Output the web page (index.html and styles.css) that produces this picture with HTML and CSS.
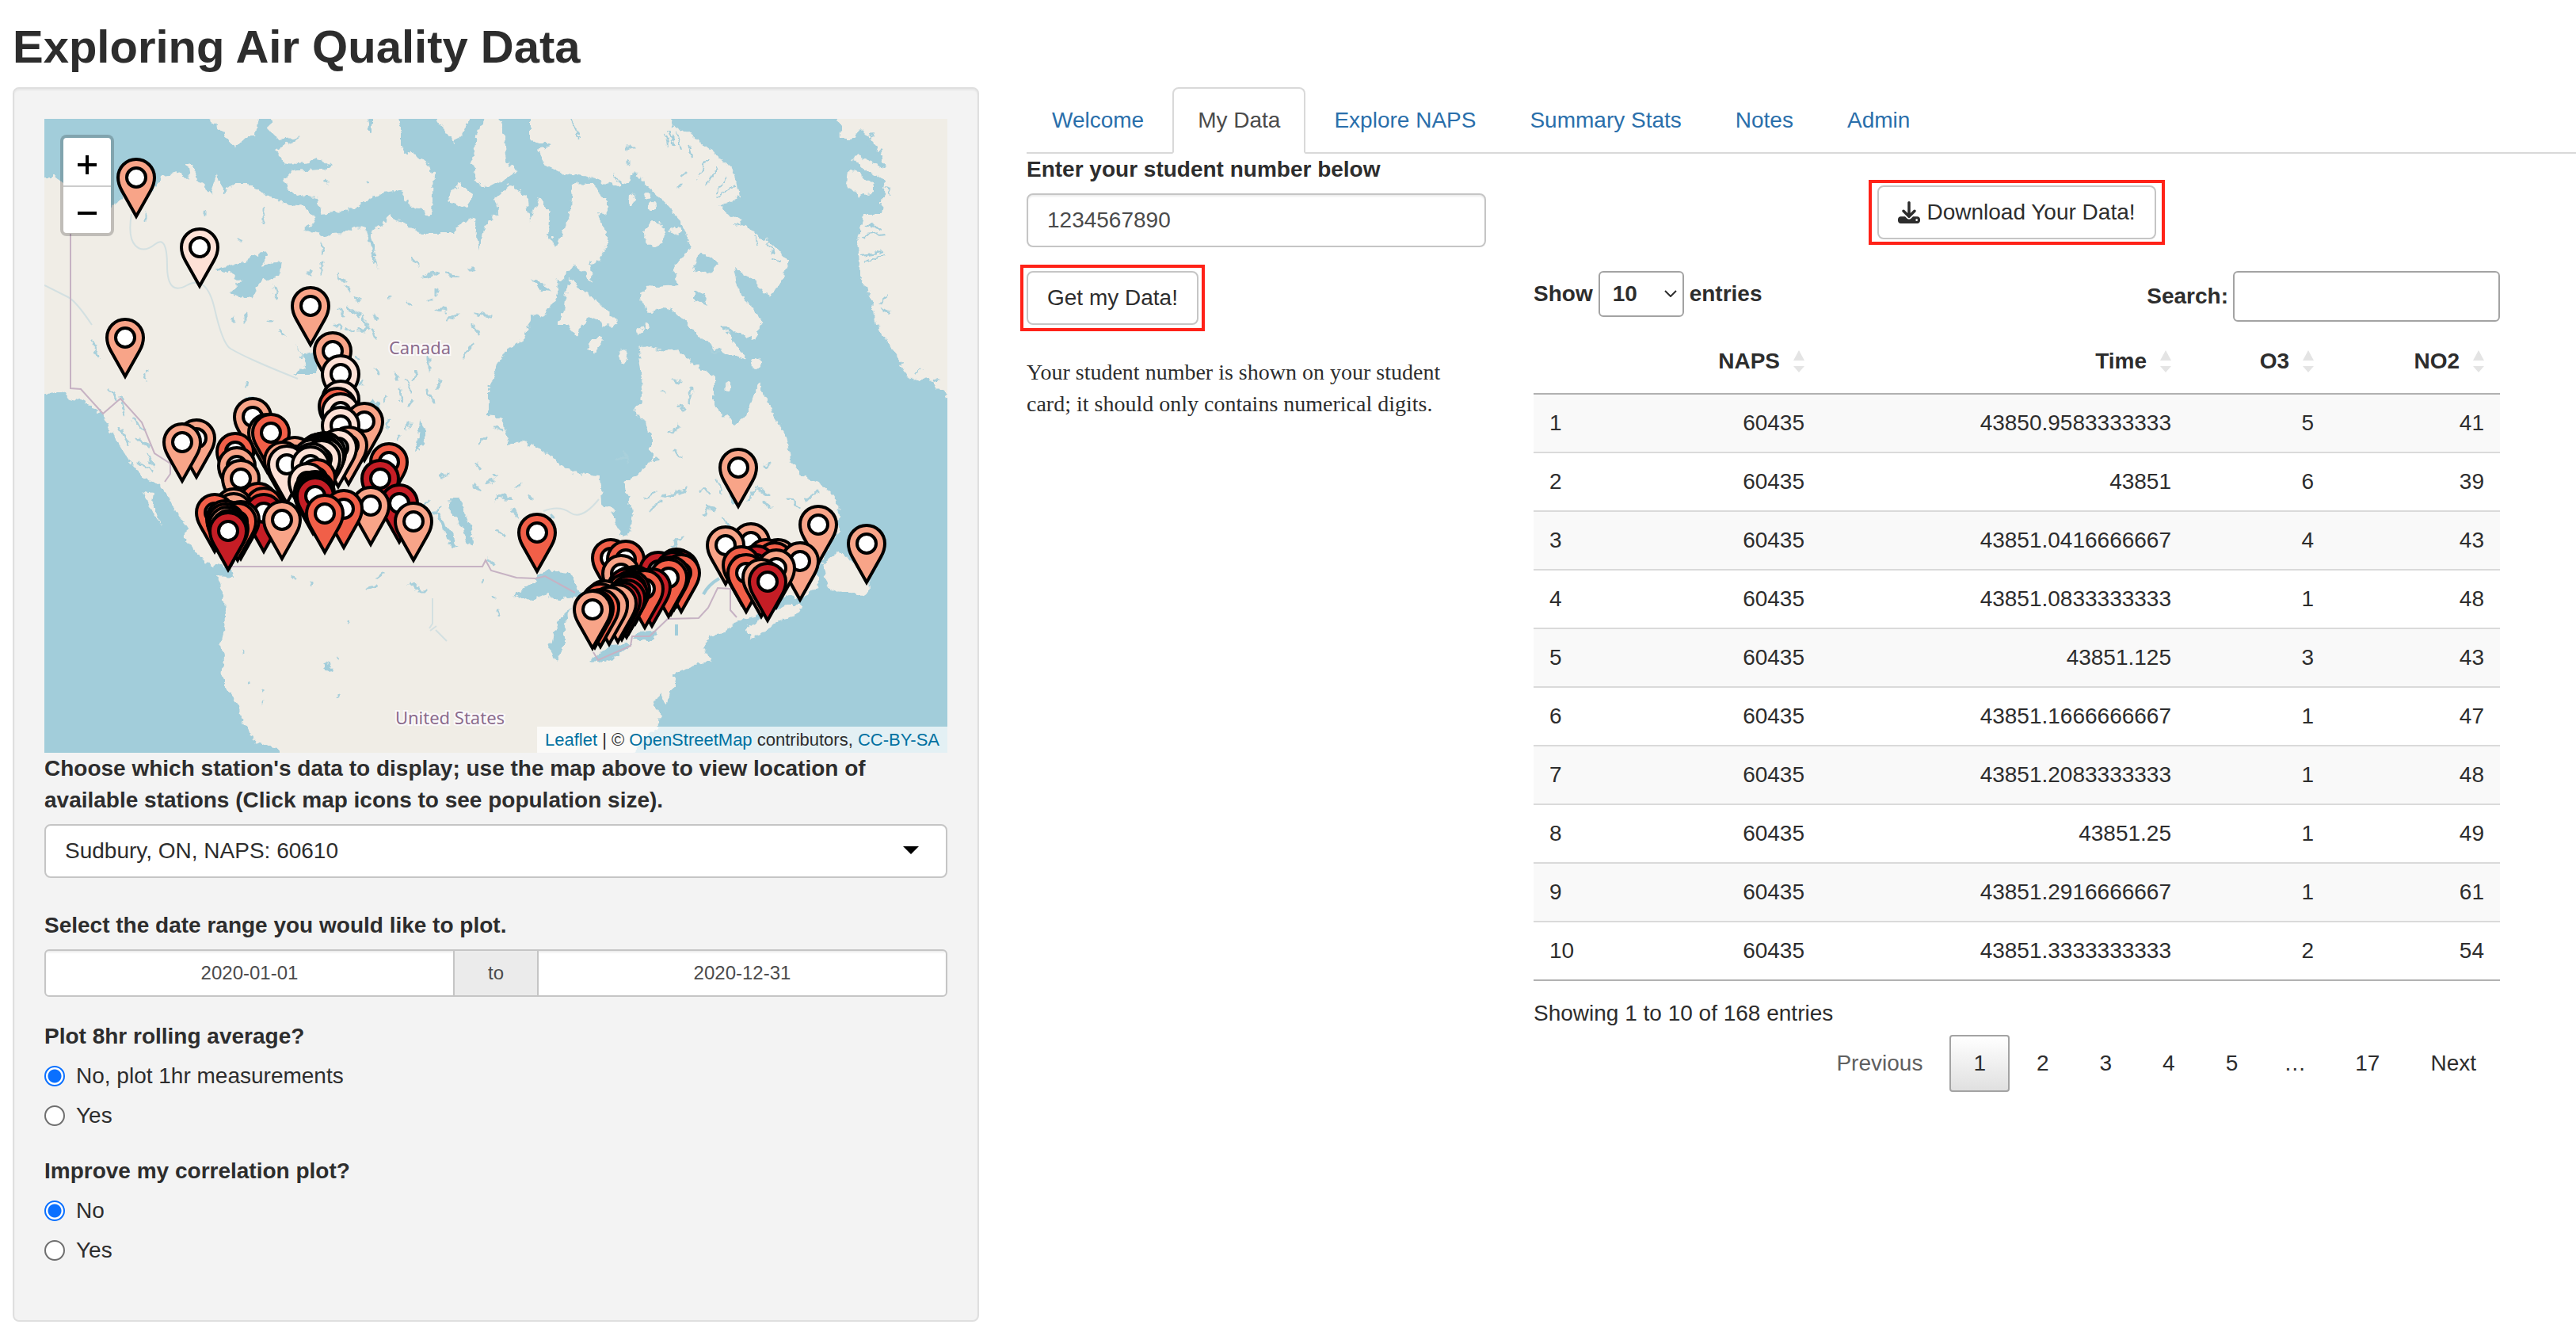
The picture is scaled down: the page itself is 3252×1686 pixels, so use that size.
FILE: index.html
```html
<!DOCTYPE html>
<html lang="en">
<head>
<meta charset="utf-8">
<meta name="viewport" content="width=device-width, initial-scale=1">
<title>Exploring Air Quality Data</title>
<link rel="stylesheet" href="styles.css">
</head>
<body>
<h1 class="page-title">Exploring Air Quality Data</h1>
<div class="layout">
  <form class="sidebar">
    <div class="map">
      <svg class="map-canvas" viewBox="0 0 1140 800" role="img" aria-label="Map of monitoring stations in Canada">
        <defs>
          <filter id="rough" x="-2%" y="-2%" width="104%" height="104%">
            <feTurbulence type="fractalNoise" baseFrequency="0.1" numOctaves="3" seed="4" result="n"/>
            <feDisplacementMap in="SourceGraphic" in2="n" scale="11" xChannelSelector="R" yChannelSelector="G"/>
          </filter>
          <g id="pin">
            <path d="M0 49L-18 17C-22 10 -23 5 -23 0A23 23 0 0 1 23 0C23 5 22 10 18 17Z" stroke="#000" stroke-width="4"/>
            <circle r="12" fill="#fff" stroke="#000" stroke-width="4"/>
          </g>
        </defs>
        <rect class="water" width="1140" height="800"/>
        <g filter="url(#rough)">
          <g class="land">
            <path d="M-20 72L13 72 26 80 50 96 85 113 95 100 136 93 148 72 173 67 183 76 179 53 189 63 199 83 211 96 219 72 226 93 238 82 258 82 279 95 303 107 328 110 340 125 342 132 326 140 352 147 377 145 393 137 405 140 421 190 413 143 438 123 454 133 479 145 515 145 528 130 544 127 548 167 556 137 565 124 573 118 568 100 589 83 609 97 613 130 624 100 638 117 636 143 645 162 654 147 664 117 666 82 691 83 711 103 711 120 699 117 705 137 713 155 699 180 689 187 691 207 672 184 650 203 646 227 630 250 615 247 605 277 585 290 571 313 560 340 560 375 577 377 587 412 605 407 626 417 646 433 670 448 701 450 703 483 720 507 730 525 740 520 744 503 732 457 748 450 766 430 766 403 758 380 744 373 756 350 754 327 750 290 760 287 785 293 799 290 822 313 846 325 846 360 858 375 871 385 887 373 895 350 902 335 915 363 936 400 942 430 956 450 985 463 1001 483 1003 520 985 548 975 570 978 590 956 605 936 600 899 627 871 637 854 650 838 652 832 667 842 683 822 690 795 700 795 717 785 737 777 725 768 740 777 750 775 770 755 785 740 800 740 830 296 830 296 800 278 790 266 787 249 757 243 737 231 723 223 700 226 680 222 663 228 630 227 603 219 577 238 579 236 567 204 560 178 533 180 517 168 497 155 473 147 463 123 450 106 430 86 397 70 370 49 357 33 353 17 345 -20 348Z"/>
            <path d="M125 470L139 472 137 487 148 512 133 493Z"/>
            <path d="M207 -20L207 0 226 17 238 37 254 23 266 23 270 0 270 -20Z"/>
            <path d="M285 -20L285 0 283 13 295 25 324 22 291 40 301 53 328 57 344 50 364 60 348 65 311 67 303 77 307 90 320 98 344 100 348 120 377 117 401 107 426 93 450 90 462 110 489 122 491 70 479 53 450 37 450 17 444 -20Z"/>
            <path d="M524 80L542 97 532 113 509 103ZM495 -20L495 0 515 30 532 13 544 -20ZM556 -20L556 0 544 23 540 50 544 77 560 87 595 68 583 47 581 23 568 -20Z"/>
            <path d="M614 -20L614 28 642 33 622 40 630 57 658 70 695 75 724 87 740 78 742 63 764 87 805 130 815 162 793 192 801 210 758 213 750 230 766 245 785 237 805 250 830 277 854 293 887 303 870 282 854 260 895 278 907 257 895 237 879 223 871 190 895 203 915 227 930 203 941 178 911 153 879 130 852 110 879 100 873 73 858 53 828 30 809 13 793 10 785 -20Z"/>
            <path d="M662 200L683 217 707 240 724 257 715 263 687 250 671 273 662 260 646 260 656 243ZM691 278L706 278 695 293 685 293Z"/>
            <ellipse cx="730" cy="300" rx="5" ry="9"/><ellipse cx="771" cy="145" rx="13" ry="16"/><ellipse cx="796" cy="141" rx="7" ry="5"/><ellipse cx="751" cy="267" rx="5" ry="6"/><ellipse cx="761" cy="262" rx="4" ry="4"/><ellipse cx="741" cy="103" rx="4" ry="8"/><ellipse cx="762" cy="98" rx="4" ry="5"/><ellipse cx="768" cy="111" rx="5" ry="5"/><ellipse cx="862" cy="338" rx="3" ry="5"/><ellipse cx="712" cy="493" rx="8" ry="4"/><ellipse cx="898" cy="308" rx="5" ry="6"/>
            <path d="M1003 -20L1003 0 1007 23 1024 23 1030 13 1050 33 1062 63 1024 45 1020 52 1050 72 1062 77 1056 120 1034 120 1026 163 1030 197 1046 233 1050 260 1071 293 1093 330 1115 327 1140 352 1170 360 1170 -20Z"/>
            <path d="M1015 67L1030 68 1046 83 1046 93 1028 98 1013 83Z"/>
            <path d="M956 613L948 627 928 633 903 650 891 655 885 643 899 633 936 613ZM982 562L1003 545 1015 555 1040 575 1041 596 1030 603 1020 597 1004 597 988 590Z"/>
          </g>
          <g class="water">
            <path d="M213 190L246 183 279 167 283 173 271 187 299 180 295 200 275 203 258 227 234 220 248 203 230 193ZM317 283L324 300 346 293 344 323 311 323 332 313Z"/>
            <path d="M511 477L523 477 539 517 541 537 533 540 529 517 513 497ZM494 495L499 497 521 540 514 543 505 520Z"/>
            <path d="M474 380L482 396 480 412 468 420 472 400ZM414 352L424 364 418 374 410 360Z"/>
            <path d="M591 602L613 587 634 570 662 573 679 600 646 607 634 600 609 607ZM676 610L654 627 642 650 638 670 646 683 656 670 656 643 666 618ZM680 602L700 600 722 625 715 645 700 655 694 640Z"/>
            <path d="M690 683L707 687 740 667 736 660 707 670ZM740 657L748 648 773 647 768 657Z"/>
            <path d="M353 685L362 690 363 698 355 694ZM819 192L828 168 850 182 842 192 828 196ZM820 215L832 222 837 236 820 228ZM615 200L625 205 640 218 628 217Z"/>
            <path d="M408 -5L414 0 414 16 409 12Z"/>
          </g>
          <path class="lakes" d="M356 78l2 2M406 80l3 1M276 112v20M203 118v4M127 120v10M244 154h4M350 158l2 12M350 182v14M335 192v6M370 196l8 10M380 212l6 8M390 226l8 3M372 240l6 10M384 238l14 10M402 250l8 12M416 246l4 8M366 258l8 8M380 264l12 4M398 268l12 -4M414 266l4 10M290 212l4 14M254 248v8M282 254h6M295 266l10 8M238 250v6M340 220l8 14M464 176l8 8M478 200l20 -6M506 196l18 4M536 190h8M496 216v6M434 226h4M456 232l6 4M484 228h6M542 246l20 4M510 252l14 -6M540 260l10 12M496 240l10 2M540 286l-10 14M486 300v16M470 318l-6 12M456 330l8 14M442 322l4 8M420 316l4 6M432 350l-4 8M450 342l2 16M466 354l-6 8M404 330l-4 6M392 300l6 4M484 344l8 14M500 330l-4 12M436 380l-4 8M448 400v6M444 428l-6 6M456 390l6 -6M254 332v6M96 276l6 14M60 280l8 20M128 320v8M256 352h8M96 350l6 24M82 340l10 14M112 380l14 12M96 390l10 20M116 404l18 8M130 424l8 14M118 434l16 10M500 450h8M484 480l-6 10M500 490l-8 8M544 460l6 8M566 448l6 4M580 476l-10 4M590 494l6 8M570 520l12 6M560 556l8 8M556 582l-3 3M566 604l3 2M572 622v3M462 586l12 8M474 596h10M420 580l8 -6M408 592l12 -2M336 584v6M314 578l2 2M384 634v2M260 712v2M276 720v3M371 726v3M275 736v2M251 672v2M370 680v2M570 390l8 2M548 410l10 -8M556 460l14 -4M578 478l12 2M546 436l4 6M596 466l6 -4M612 476l4 2M640 500h4M758 480l14 -8M766 494l12 -12M782 476l20 -6M796 472l14 -4M830 468l10 6M836 486l10 8M850 456l6 14M866 470l4 14M890 482l6 -14M900 466l14 8M908 486l10 4M832 500l6 -10M856 506l8 4M792 540l12 -14M798 536l-4 10M794 330l8 2M780 344l4 2M800 362l10 4M818 340l-3 18M786 396l16 -8M796 420l10 6M770 430l6 2M844 290l4 4M910 440l6 -4M732 420l6 14M724 430l10 -4M960 480l16 -8M940 480l12 10M805 74l4 -6M802 86v2M736 36h6M738 54v4"/>
          <path class="fjords" d="M788 14l6 20M798 18l6 22M812 30l6 18M838 52l-14 22M848 60l-12 24M862 74l-14 20M872 84l-24 16M878 100l-18 6M784 18l4 16M870 134l14 -2M896 146l4 14M912 156l8 14M930 180l-12 -6M1034 26l14 -6M1038 36l16 2M1046 46l12 -8M1036 132l20 6M1032 148l30 -4M1032 172l28 -4M1036 180l24 -8M1052 234l12 -10M1054 240l14 4M1062 88l8 6M1100 322l8 -8M1122 332l8 -4M718 70l16 20M664 0l10 22M690 180l10 26"/>
        </g>
        <path class="rivers" d="M0 210Q20 220 30 225T60 260M110 120Q105 150 115 160T140 158T155 185T180 210T215 240T235 290T265 305T320 328M490 605v32l-4 6M494 645l14 14M495 640l-8 6M630 495q20 -8 34 2T700 480"/>
        <path class="borders" d="M33 145V340L46 341 74 372 96 353 123 383 139 422 159 435 159 448 152 458M237 565H553L557 557 564 570 596 579 620 580 632 577 670 598M693 673L699 683 740 665 742 653 764 653 787 631 826 630 838 617 850 592 866 593 866 620 874 629"/>
        <path class="river-wide" d="M832 600Q838 588 852 580M798 638v14"/>
        <text class="place" x="474" y="297">Canada</text>
        <text class="place" x="512" y="764">United States</text>
        <g class="pins">
          <use href="#pin" x="116" y="74" class="p2"/><use href="#pin" x="196" y="162" class="p1"/><use href="#pin" x="336" y="236" class="p2"/><use href="#pin" x="102" y="276" class="p2"/><use href="#pin" x="364" y="293" class="p2"/><use href="#pin" x="374" y="322" class="p1"/><use href="#pin" x="374" y="354" class="p1"/><use href="#pin" x="370" y="363" class="p3"/><use href="#pin" x="374" y="370" class="p1"/><use href="#pin" x="263" y="376" class="p2"/><use href="#pin" x="404" y="382" class="p2"/><use href="#pin" x="374" y="387" class="p1"/><use href="#pin" x="281" y="396" class="p2"/><use href="#pin" x="286" y="396" class="p3"/><use href="#pin" x="192" y="403" class="p2"/><use href="#pin" x="174" y="408" class="p2"/>
          <use href="#pin" x="384" y="412" class="p2"/><use href="#pin" x="371" y="415" class="p1"/><use href="#pin" x="241" y="420" class="p3"/><use href="#pin" x="354" y="419" class="p2"/><use href="#pin" x="350" y="420" class="p1"/><use href="#pin" x="346" y="421" class="p3"/><use href="#pin" x="357" y="422" class="p1"/><use href="#pin" x="342" y="424" class="p2"/><use href="#pin" x="353" y="424" class="p1"/><use href="#pin" x="316" y="425" class="p2"/><use href="#pin" x="355" y="427" class="p1"/><use href="#pin" x="338" y="428" class="p1"/><use href="#pin" x="350" y="429" class="p1"/><use href="#pin" x="301" y="431" class="p2"/><use href="#pin" x="338" y="433" class="p1"/><use href="#pin" x="435" y="433" class="p3"/><use href="#pin" x="306" y="436" class="p1"/><use href="#pin" x="336" y="437" class="p1"/><use href="#pin" x="243" y="438" class="p2"/>
          <use href="#pin" x="344" y="453" class="p3"/><use href="#pin" x="248" y="454" class="p2"/><use href="#pin" x="424" y="454" class="p4"/><use href="#pin" x="332" y="458" class="p1"/><use href="#pin" x="342" y="468" class="p3"/><use href="#pin" x="339" y="470" class="p2"/><use href="#pin" x="343" y="472" class="p4"/><use href="#pin" x="339" y="474" class="p3"/><use href="#pin" x="342" y="476" class="p4"/>
          <use href="#pin" x="270" y="483" class="p3"/><use href="#pin" x="448" y="485" class="p4"/><use href="#pin" x="412" y="488" class="p2"/><use href="#pin" x="277" y="489" class="p3"/><use href="#pin" x="239" y="490" class="p2"/><use href="#pin" x="378" y="492" class="p3"/><use href="#pin" x="239" y="496" class="p2"/><use href="#pin" x="277" y="497" class="p4"/><use href="#pin" x="215" y="497" class="p3"/><use href="#pin" x="354" y="498" class="p3"/><use href="#pin" x="228" y="505" class="p3"/><use href="#pin" x="300" y="506" class="p2"/><use href="#pin" x="248" y="506" class="p2"/><use href="#pin" x="244" y="508" class="p3"/><use href="#pin" x="466" y="508" class="p2"/><use href="#pin" x="229" y="509" class="p3"/><use href="#pin" x="231" y="513" class="p2"/><use href="#pin" x="234" y="517" class="p4"/><use href="#pin" x="232" y="520" class="p4"/>
          <use href="#pin" x="876" y="440" class="p2"/><use href="#pin" x="977" y="512" class="p2"/><use href="#pin" x="622" y="522" class="p3"/><use href="#pin" x="892" y="534" class="p2"/><use href="#pin" x="1038" y="536" class="p2"/><use href="#pin" x="860" y="538" class="p2"/><use href="#pin" x="926" y="554" class="p2"/><use href="#pin" x="911" y="554" class="p3"/><use href="#pin" x="715" y="554" class="p3"/><use href="#pin" x="734" y="556" class="p3"/><use href="#pin" x="922" y="558" class="p3"/><use href="#pin" x="954" y="558" class="p2"/><use href="#pin" x="899" y="562" class="p4"/><use href="#pin" x="880" y="563" class="p3"/><use href="#pin" x="798" y="566" class="p3"/><use href="#pin" x="802" y="568" class="p4"/><use href="#pin" x="924" y="567" class="p2"/><use href="#pin" x="775" y="570" class="p4"/><use href="#pin" x="795" y="570" class="p4"/><use href="#pin" x="804" y="573" class="p3"/><use href="#pin" x="886" y="573" class="p3"/><use href="#pin" x="728" y="574" class="p2"/><use href="#pin" x="791" y="576" class="p3"/><use href="#pin" x="788" y="579" class="p3"/><use href="#pin" x="905" y="579" class="p2"/><use href="#pin" x="913" y="584" class="p4"/>
          <use href="#pin" x="746" y="588" class="p4"/><use href="#pin" x="739" y="589" class="p3"/><use href="#pin" x="743" y="590" class="p3"/><use href="#pin" x="735" y="591" class="p4"/><use href="#pin" x="767" y="591" class="p4"/><use href="#pin" x="758" y="593" class="p3"/><use href="#pin" x="741" y="594" class="p4"/><use href="#pin" x="737" y="596" class="p4"/><use href="#pin" x="733" y="598" class="p3"/><use href="#pin" x="738" y="600" class="p4"/><use href="#pin" x="735" y="605" class="p4"/><use href="#pin" x="707" y="606" class="p2"/><use href="#pin" x="729" y="608" class="p4"/><use href="#pin" x="702" y="610" class="p3"/><use href="#pin" x="724" y="611" class="p2"/><use href="#pin" x="713" y="614" class="p2"/><use href="#pin" x="702" y="617" class="p3"/><use href="#pin" x="695" y="618" class="p3"/><use href="#pin" x="692" y="619" class="p2"/>
        </g>
      </svg>
      <div class="zoom">
        <button type="button" aria-label="Zoom in"><svg viewBox="0 0 24 24"><path d="M0 12h24M12 0v24"/></svg></button>
        <button type="button" aria-label="Zoom out"><svg viewBox="0 0 24 24"><path d="M0 12h24"/></svg></button>
      </div>
      <div class="attribution"><a href="#">Leaflet</a> | © <a href="#">OpenStreetMap</a> contributors, <a href="#">CC-BY-SA</a></div>
    </div>

    <div class="group group-station">
      <label class="heading" for="station">Choose which station's data to display; use the map above to view location of available stations (Click map icons to see population size).</label>
      <div class="select-box">
        <select id="station"><option>Sudbury, ON, NAPS: 60610</option></select>
        <svg viewBox="0 0 20 10"><path d="M0 0h20L10 10z"/></svg>
      </div>
    </div>
    <div class="group">
      <label class="heading" for="date-from">Select the date range you would like to plot.</label>
      <div class="dates">
        <input id="date-from" type="text" value="2020-01-01">
        <span>to</span>
        <input type="text" value="2020-12-31" aria-label="End date">
      </div>
    </div>
    <fieldset class="group">
      <legend class="heading">Plot 8hr rolling average?</legend>
      <label class="radio"><input type="radio" name="avg" checked>No, plot 1hr measurements</label>
      <label class="radio"><input type="radio" name="avg">Yes</label>
    </fieldset>
    <fieldset class="group">
      <legend class="heading">Improve my correlation plot?</legend>
      <label class="radio"><input type="radio" name="corr" checked>No</label>
      <label class="radio"><input type="radio" name="corr">Yes</label>
    </fieldset>
  </form>

  <main class="main">
    <nav class="tabs">
      <a href="#">Welcome</a>
      <a href="#" class="active" aria-current="page">My Data</a>
      <a href="#">Explore NAPS</a>
      <a href="#">Summary Stats</a>
      <a href="#">Notes</a>
      <a href="#">Admin</a>
    </nav>
    <div class="panel">
      <section class="student">
        <label class="heading" for="student">Enter your student number below</label>
        <input id="student" class="field" type="text" value="1234567890">
        <button type="button" class="btn marked">Get my Data!</button>
        <p>Your student number is shown on your student card; it should only contains numerical digits.</p>
      </section>
      <section class="data">
        <button type="button" class="btn marked btn-download"><svg viewBox="0 0 512 512" aria-hidden="true"><path d="M288 32c0-17.700-14.300-32-32-32s-32 14.300-32 32V274.700l-73.400-73.400c-12.500-12.500-32.800-12.500-45.300 0s-12.500 32.800 0 45.300l128 128c12.500 12.500 32.800 12.500 45.300 0l128-128c12.500-12.500 12.500-32.800 0-45.300s-32.800-12.500-45.300 0L288 274.700V32zM64 352c-35.300 0-64 28.700-64 64v32c0 35.300 28.700 64 64 64H448c35.300 0 64-28.700 64-64V416c0-35.300-28.700-64-64-64H346.500l-45.300 45.300c-25 25-65.500 25-90.500 0L165.500 352H64zm368 56a24 24 0 1 1 0 48 24 24 0 1 1 0-48z"/></svg> Download Your Data!</button>
        <div class="toolbar">
          <label class="length">Show
            <span class="length-box"><select><option>10</option></select><svg viewBox="0 0 16 9"><path d="M1 1l7 7 7-7"/></svg></span>
            entries</label>
          <label class="search">Search:<input type="search"></label>
        </div>
        <table>
          <colgroup><col class="c-row"><col class="c-naps"><col><col class="c-o3"><col class="c-no2"></colgroup>
          <thead>
            <tr>
              <th></th>
              <th><span class="sort">NAPS<svg viewBox="0 0 14 28"><path d="M7 0l7 13H0zM0 20h14l-7 8z"/></svg></span></th>
              <th><span class="sort">Time<svg viewBox="0 0 14 28"><path d="M7 0l7 13H0zM0 20h14l-7 8z"/></svg></span></th>
              <th><span class="sort">O3<svg viewBox="0 0 14 28"><path d="M7 0l7 13H0zM0 20h14l-7 8z"/></svg></span></th>
              <th><span class="sort">NO2<svg viewBox="0 0 14 28"><path d="M7 0l7 13H0zM0 20h14l-7 8z"/></svg></span></th>
            </tr>
          </thead>
          <tbody>
            <tr><td>1</td><td>60435</td><td>43850.9583333333</td><td>5</td><td>41</td></tr>
            <tr><td>2</td><td>60435</td><td>43851</td><td>6</td><td>39</td></tr>
            <tr><td>3</td><td>60435</td><td>43851.0416666667</td><td>4</td><td>43</td></tr>
            <tr><td>4</td><td>60435</td><td>43851.0833333333</td><td>1</td><td>48</td></tr>
            <tr><td>5</td><td>60435</td><td>43851.125</td><td>3</td><td>43</td></tr>
            <tr><td>6</td><td>60435</td><td>43851.1666666667</td><td>1</td><td>47</td></tr>
            <tr><td>7</td><td>60435</td><td>43851.2083333333</td><td>1</td><td>48</td></tr>
            <tr><td>8</td><td>60435</td><td>43851.25</td><td>1</td><td>49</td></tr>
            <tr><td>9</td><td>60435</td><td>43851.2916666667</td><td>1</td><td>61</td></tr>
            <tr><td>10</td><td>60435</td><td>43851.3333333333</td><td>2</td><td>54</td></tr>
          </tbody>
        </table>
        <div class="info">Showing 1 to 10 of 168 entries</div>
        <div class="pages">
          <button type="button" class="muted">Previous</button>
          <button type="button" class="current">1</button>
          <button type="button">2</button>
          <button type="button">3</button>
          <button type="button">4</button>
          <button type="button">5</button>
          <span>…</span>
          <button type="button">17</button>
          <button type="button">Next</button>
        </div>
      </section>
    </div>
  </main>
</div>
</body>
</html>
```
FILE: styles.css
```css
* { box-sizing: border-box; }

body {
  margin: 0;
  padding: 24px 0 20px 16px;
  background: #fff;
  color: #2d2d2d;
  font: 28px/40px "Liberation Sans", Arial, Helvetica, sans-serif;
}

input, select, button { font: inherit; color: inherit; }
a { color: #2a6fab; text-decoration: none; }

.page-title {
  margin: 0 0 18px;
  padding-top: 2px;
  font-size: 58px;
  line-height: 66px;
  font-weight: 700;
}

.layout {
  display: grid;
  grid-template-columns: 305fr 489fr;
  gap: 60px;
  align-items: start;
}

/* Sidebar */
.sidebar {
  padding: 38px;
  background: #f3f3f3;
  border: 2px solid #dfdfdf;
  border-radius: 8px;
  box-shadow: inset 0 2px 2px rgba(0, 0, 0, .05);
}

.map { position: relative; }
.map-canvas { display: block; width: 100%; height: auto; }
.water { fill: #a2cdda; }
.land { fill: #f0ede6; }
.lakes { fill: none; stroke: #a9d0db; stroke-width: 3; stroke-linecap: round; }
.fjords { fill: none; stroke: #a2cdda; stroke-width: 2; }
.rivers { fill: none; stroke: #d3e0e1; stroke-width: 2; }
.river-wide { fill: none; stroke: #a2cdda; stroke-width: 4; }
.borders { fill: none; stroke: #c6b2c3; stroke-width: 2; }
.place {
  fill: #8b6c8c;
  stroke: #fbf9fa;
  stroke-width: 4px;
  paint-order: stroke;
  text-anchor: middle;
  font: 22px "Noto Sans", sans-serif;
}
.p1 { fill: #fde1d6; }
.p2 { fill: #f8a488; }
.p3 { fill: #f15f48; }
.p4 { fill: #c51d25; }

.zoom {
  position: absolute;
  top: 20px;
  left: 20px;
  width: 68px;
  border: 4px solid rgba(0, 0, 0, .2);
  border-radius: 8px;
  background: #fff;
  background-clip: padding-box;
}
.zoom button {
  display: grid;
  place-items: center;
  width: 60px;
  height: 60px;
  padding: 8px 0 0;
  border: 0;
  background: none;
}
.zoom button + button { border-top: 2px solid #ccc; }
.zoom svg { width: 24px; height: 24px; stroke: #000; stroke-width: 4; }

.attribution {
  position: absolute;
  right: 0;
  bottom: 0;
  padding: 0 10px;
  background: rgba(255, 255, 255, .7);
  font-size: 22px;
  line-height: 33px;
}
.attribution a { color: #0071a1; }

.group { margin: 0 0 30px; padding: 0; border: 0; }
.group-station { margin-bottom: 40px; }
.heading {
  display: block;
  margin-bottom: 10px;
  padding: 0;
  font-weight: 700;
}

.select-box { position: relative; }
.select-box select {
  display: block;
  width: 100%;
  height: 68px;
  padding: 0 24px;
  appearance: none;
  background: #fff;
  border: 2px solid #c5c5c5;
  border-radius: 8px;
}
.select-box svg {
  position: absolute;
  top: 28px;
  right: 36px;
  width: 20px;
  height: 10px;
  pointer-events: none;
}

.dates {
  display: flex;
  height: 60px;
  border: 2px solid #c5c5c5;
  border-radius: 6px;
  overflow: hidden;
  color: #4b4b4b;
  font-size: 24px;
  background: #fff;
}
.dates input {
  flex: 1;
  min-width: 0;
  border: 0;
  background: none;
  text-align: center;
  box-shadow: inset 0 2px 2px rgba(0, 0, 0, .075);
}
.dates span {
  width: 108px;
  border: solid #c5c5c5;
  border-width: 0 2px;
  background: #ebebeb;
  text-align: center;
  line-height: 56px;
}

.radio { display: flex; align-items: center; gap: 14px; }
.radio + .radio { margin-top: 10px; }
.radio input {
  appearance: none;
  width: 26px;
  height: 26px;
  margin: 0;
  border: 2px solid #6f6f6f;
  border-radius: 50%;
  background: #fff;
}
.radio input:checked {
  border-color: #0a70ff;
  background: radial-gradient(circle, #0a70ff 8px, #fff 9px);
}

/* Tabs */
.tabs {
  display: flex;
  gap: 4px;
  border-bottom: 2px solid #d9d9d9;
}
.tabs a {
  margin-bottom: -2px;
  padding: 20px 30px;
  border: 2px solid transparent;
  border-radius: 8px 8px 0 0;
}
.tabs .active {
  color: #4b4b4b;
  background: #fff;
  border-color: #d9d9d9 #d9d9d9 #fff;
}

.panel {
  display: grid;
  grid-template-columns: 29fr 61fr;
  gap: 60px;
  padding-right: 96px;
}

.field {
  display: block;
  width: 100%;
  height: 68px;
  margin-bottom: 30px;
  padding: 0 24px;
  border: 2px solid #c5c5c5;
  border-radius: 8px;
  box-shadow: inset 0 2px 2px rgba(0, 0, 0, .075);
  color: #4b4b4b;
}
.student p {
  margin: 40px 0 0;
  font-family: "Liberation Serif", "Times New Roman", serif;
}

.btn {
  position: relative;
  height: 68px;
  padding: 0 24px;
  border: 2px solid #c5c5c5;
  border-radius: 8px;
  background: #fff;
}
.marked::after {
  content: "";
  position: absolute;
  inset: -10px;
  border: 4px solid #ff2218;
}
.btn-download {
  display: flex;
  align-items: center;
  gap: 8px;
  margin: 40px auto;
}
.btn-download::after { inset: -9px -13px; }
.btn-download svg { width: 28px; height: 28px; fill: #2d2d2d; }

.toolbar {
  display: flex;
  justify-content: space-between;
  align-items: flex-start;
  margin-bottom: 10px;
  font-weight: 700;
}
.length { display: flex; align-items: center; gap: 7px; }
.length-box { position: relative; }
.length-box select {
  display: block;
  width: 108px;
  height: 58px;
  padding: 0 16px;
  appearance: none;
  background: #fff;
  border: 2px solid #a3a3a3;
  border-radius: 6px;
}
.length-box svg {
  position: absolute;
  top: 24px;
  right: 9px;
  width: 16px;
  height: 9px;
  fill: none;
  stroke: #2d2d2d;
  stroke-width: 2;
  pointer-events: none;
}
.search { display: flex; align-items: center; gap: 6px; }
.search input {
  width: 337px;
  height: 64px;
  padding: 0 10px;
  border: 2px solid #a3a3a3;
  border-radius: 6px;
  background: #fff;
}

table {
  width: 100%;
  table-layout: fixed;
  border-collapse: separate;
  border-spacing: 0;
  border-bottom: 2px solid #b1b1b1;
}
.c-row { width: 140px; }
.c-naps { width: 222px; }
.c-o3 { width: 180px; }
.c-no2 { width: 215px; }
th, td { text-align: right; }
th { padding: 20px; border-bottom: 2px solid #b1b1b1; }
td { padding: 16px 20px; border-top: 2px solid #dadada; }
td:first-child { text-align: left; }
tbody tr:first-child td { border-top: 0; }
tbody tr:nth-child(odd) { background: #f9f9f9; }
.sort { display: flex; align-items: center; justify-content: flex-end; gap: 17px; }
.sort svg { width: 14px; height: 28px; fill: #e4e4e4; }

.info { padding-top: 21px; }
.pages { display: flex; justify-content: flex-end; padding-top: 7px; }
.pages button {
  margin-left: 4px;
  padding: 14px 28px;
  border: 2px solid transparent;
  border-radius: 4px;
  background: none;
}
.pages span { padding: 16px 28px; }
.pages .muted { color: #606060; }
.pages .current {
  border-color: #a3a3a3;
  background: linear-gradient(#fff, #e0e0e0);
}
```
